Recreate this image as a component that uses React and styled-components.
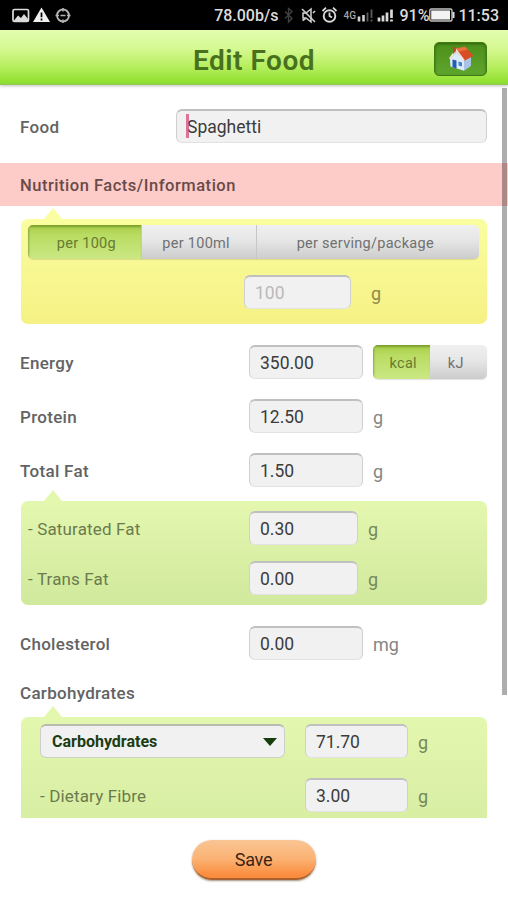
import React, { Component } from 'react'
import styled, { createGlobalStyle } from 'styled-components'

const GlobalStyle = createGlobalStyle`
    * {
        box-sizing: border-box;
    }

    body {
        margin: 0;
        background-color: #fefffe;
        font-family: Roboto, sans-serif;
    }
`

const Screen = styled.div`
    display: flex;
    flex-direction: column;
    width: 508px;
    height: 900px;
    overflow: hidden;
    background-color: #fefffe;
`

const StatusBar = styled.div`
    display: flex;
    justify-content: space-between;
    flex: none;
    height: 30px;
    background-color: #000;
    color: #dcdcdc;
`

const StatusText = styled.span`
    font-size: 16px;
    font-weight: 500;
    line-height: 31px;
    margin-left: ${props => props.$left || 0}px;
    white-space: nowrap;
`

const StatusGroup = styled.div`
    display: flex;
    align-items: center;
    padding: ${props => props.$padding};

    svg {
        flex: none;
    }
`

const Header = styled.div`
    display: grid;
    grid-template-columns: 74px 1fr 74px;
    align-items: center;
    flex: none;
    height: 55px;
    padding-top: 3px;
    background: linear-gradient(#e2fdb0 0%, #d5f890 35%, #b5ee5c 68%, #8fdf2e 96%, #93c55a 100%);
    box-shadow: 0 1px 3px rgba(0, 0, 0, 0.25);
    position: relative;
`

const Title = styled.h1`
    grid-column: 2;
    margin: 0;
    padding-top: 4px;
    color: #47711c;
    font-size: 28px;
    font-weight: 600;
    line-height: 34px;
    letter-spacing: 0.5px;
    text-align: center;
`

const HomeButton = styled.button`
    display: flex;
    align-items: center;
    justify-content: center;
    width: 53px;
    height: 34px;
    padding: 0;
    border: 1px solid #3f7b13;
    border-radius: 5px;
    background: linear-gradient(#4c8f1a, #5fa52c);
    box-shadow: inset 0 1px 3px rgba(0, 0, 0, 0.35);
`

const Content = styled.div`
    flex: none;
    height: 733px;
    overflow: hidden;
    position: relative;
`

const ScrollThumb = styled.div`
    position: absolute;
    top: 3px;
    right: 1px;
    width: 5px;
    height: 607px;
    background-color: rgba(0, 0, 0, 0.32);
`

const Row = styled.div`
    display: flex;
    align-items: center;
    height: 34px;
    margin-top: ${props => props.$top}px;
    padding-left: ${props => props.$left}px;
`

const Label = styled.label`
    flex: none;
    width: ${props => props.$width}px;
    padding-top: 1px;
    color: ${props => props.$sub ? '#6b7b4d' : '#636363'};
    font-size: 17px;
    font-weight: ${props => props.$sub ? 400 : 500};
    line-height: 22px;
    letter-spacing: ${props => props.$sub ? 0.15 : 0.3}px;
    white-space: nowrap;
`

const FieldBox = styled.div`
    flex: none;
    position: relative;
    width: ${props => props.$width}px;
    height: 34px;
`

const Field = styled.input`
    display: block;
    width: 100%;
    height: 34px;
    padding: 1px 10px 0;
    border: 1px solid #d0d0d0;
    border-top: 2px solid #c0c0c0;
    border-bottom-color: #e2e2e2;
    border-radius: 6px;
    outline: none;
    background-color: #f1f1f1;
    color: ${props => props.$muted ? '#b9b9b9' : '#3c3c3c'};
    font-family: inherit;
    font-size: 17.5px;
    letter-spacing: 0;
`

const Caret = styled.span`
    position: absolute;
    top: 5px;
    left: 10px;
    width: 3px;
    height: 24px;
    background-color: rgba(214, 72, 122, 0.75);
`

const Unit = styled.span`
    margin-left: ${props => props.$left || 10}px;
    color: ${props => props.$color || '#858585'};
    font-size: 18px;
    line-height: 22px;
    padding-top: 3px;
`

const SectionTitle = styled.div`
    height: 43px;
    margin-top: 20px;
    padding-left: 20px;
    background-color: #fdcbc8;
    color: #694b49;
    font-size: 16.5px;
    font-weight: 500;
    line-height: 46px;
    letter-spacing: 0.52px;
`

const panelColors = {
    yellow: ['#fafea0', '#f5f184'],
    green: ['#e4f7af', '#d0e99c'],
}

const Panel = styled.div`
    position: relative;
    width: 466px;
    height: ${props => props.$height}px;
    margin-top: ${props => props.$top}px;
    margin-left: 21px;
    border-radius: 7px;
    background: linear-gradient(${props => panelColors[props.$tone].join(', ')});
    display: flow-root;

    &::before {
        content: '';
        position: absolute;
        top: -11px;
        left: 23px;
        border: 9px solid transparent;
        border-top: none;
        border-bottom: 11px solid ${props => panelColors[props.$tone][0]};
    }
`

const Segments = styled.div`
    display: flex;
    flex: none;
    width: ${props => props.$width}px;
    height: 34px;
    margin: ${props => props.$margin};
    border-radius: 5px;
    overflow: hidden;
    box-shadow: 0 1px 1px rgba(0, 0, 0, 0.12);
`

const Segment = styled.button`
    flex: ${props => props.$grow || 1} 1 0;
    padding: 3px ${props => props.$active ? 0 : 5}px 0 ${props => props.$active ? 4 : 0}px;
    border: none;
    border-left: ${props => props.$divided ? '1px solid #c6c6c6' : 'none'};
    background: ${props => props.$active
        ? 'linear-gradient(#a7cc48, #b9dc62 30%, #cbe884)'
        : 'linear-gradient(#f0f0f0, #e6e6e6 45%, #cccccc)'};
    box-shadow: ${props => props.$active ? 'inset 1px 2px 2px rgba(60, 90, 0, 0.4)' : 'none'};
    color: ${props => props.$active ? '#647b30' : '#707070'};
    font-family: inherit;
    font-size: 14.5px;
    letter-spacing: 0.28px;
`

const Select = styled.div`
    display: flex;
    align-items: center;
    justify-content: space-between;
    flex: none;
    width: 245px;
    height: 34px;
    margin-right: 20px;
    padding: 0 7px 0 11px;
    border: 1px solid #cdd0c8;
    border-top: 2px solid #b8bcb0;
    border-radius: 6px;
    background-color: #f1f1f1;
    color: #1c3d14;
    font-size: 16px;
    font-weight: 700;
`

const Footer = styled.div`
    display: flex;
    justify-content: center;
    flex: 1;
    padding-top: 22px;
`

const SaveButton = styled.button`
    width: 124px;
    height: 40px;
    border: none;
    border-bottom: 2px solid #a9602f;
    border-radius: 20px;
    background: linear-gradient(#f9c594, #fbb273 50%, #fb8d3f 92%);
    box-shadow: 0 1px 2px rgba(80, 40, 0, 0.5);
    color: #3d2415;
    font-family: inherit;
    font-size: 18px;
    letter-spacing: -0.3px;
    margin-right: 1px;
    padding: 0;
`

const NoticeIcons = () => (
    <svg width="62" height="20" viewBox="0 0 62 20" fill="none">
        <rect x="1" y="4.5" width="15.5" height="12" rx="1.5" stroke="#dcdcdc" strokeWidth="1.7" />
        <path d="M2 15.5l4-5 3 2.5 3-4 4 5v2.5H2z" fill="#dcdcdc" />
        <path d="M29.5 2.5L38 17H21z" fill="#f0f0f0" />
        <path d="M29.5 7.5v4.8M29.5 13.6v1.8" stroke="#000" strokeWidth="1.7" />
        <circle cx="51" cy="10.5" r="6" stroke="#b4b4b4" strokeWidth="1.8" />
        <path d="M51 3v3.500M51 14.500V18M43.500 10.500H47M55 10.500h3.500M48.500 10.500h5" stroke="#b4b4b4" strokeWidth="1.5" />
    </svg>
)

const SignalIcons = () => (
    <svg width="121" height="20" viewBox="0 0 121 20" fill="none">
        <path d="M7 6.500l7 7-3.500 3.500V3.500L14 6.500l-7 7" stroke="#404040" strokeWidth="1.4" />
        <path d="M25 8h3l5-4v13l-5-4h-3z" stroke="#d0d0d0" strokeWidth="1.5" />
        <path d="M24 4l13 13M35 8l2-2M24.500 15.500l3-2" stroke="#d0d0d0" strokeWidth="1.6" />
        <circle cx="51.5" cy="11" r="5.8" stroke="#d8d8d8" strokeWidth="1.9" />
        <path d="M51.5 7.5V11l2.5 1.5M44.5 6L48 2.700M58.500 6L55 2.700" stroke="#d8d8d8" strokeWidth="1.8" />
        <text x="65.500" y="14" fill="#a4a4a4" fontFamily="Roboto" fontSize="10" fontWeight="500">4G</text>
        <path d="M81 16.5v-5M85.5 16.500V10" stroke="#cfcfcf" strokeWidth="2.6" />
        <path d="M89.500 16.5V7.500M93.500 13V4.500M93.500 14.500v2" stroke="#5c5c5c" strokeWidth="1.8" />
        <path d="M101 16.5v-4M105 16.5v-6M109 16.5V7.500M113.500 13V4.500M113.500 14.500v2" stroke="#dadada" strokeWidth="2.7" />
    </svg>
)

const BatteryIcon = () => (
    <svg width="26" height="14" viewBox="0 0 26 14" fill="none">
        <rect x="0.8" y="1" width="22.2" height="12" rx="1.500" stroke="#c4c4c4" strokeWidth="1.4" />
        <rect x="2.2" y="2.400" width="18.800" height="9.200" fill="#f4f4f4" />
        <path d="M24.500 4v6" stroke="#dcdcdc" strokeWidth="2" />
    </svg>
)

const HomeIcon = () => (
    <svg width="28" height="28" viewBox="0 0 28 28">
        <path d="M3 14l6.5-7 7.5 8.5v10.3L3.5 21.5z" fill="#dceafa" />
        <path d="M17 15.5l7-3.5v9l-7 4.8z" fill="#a9c3e6" />
        <path d="M9 3.5l9-1.7 8.5 9-9.700 5.2z" fill="#d84d24" />
        <path d="M9 3.5l9-1.7 3 3-10 2z" fill="#e8703d" />
        <path d="M9 3.5L2 13.2l1.3 1 6-7.5 7.2 9.6 1.2-1.2z" fill="#f0e3dd" />
        <path d="M6 2h3v4l-3 3z" fill="#c04a2c" />
        <path d="M5.5 14.5l4 1v8l-4-1.300z" fill="#245bb5" />
        <path d="M11.5 16.5l3.5 1v4l-3.500-1z" fill="#3e82cf" />
    </svg>
)

const Chevron = () => (
    <svg width="14" height="8" viewBox="0 0 14 8">
        <path d="M0 0h14L7 8z" fill="#163d0c" />
    </svg>
)

const ValueRow = ({ top, left = 20, label, labelWidth, width, value, unit, sub, unitColor }) => (
    <Row $top={top} $left={left}>
        <Label $width={labelWidth} $sub={sub}>{label}</Label>
        <FieldBox $width={width}>
            <Field defaultValue={value} />
        </FieldBox>
        <Unit $color={unitColor}>{unit}</Unit>
    </Row>
)

export default class App extends Component {
    constructor(props){
        super(props);

        this.state = { per: 'per 100g', energyUnit: 'kcal' }
    }

    render() {
        const per = this.state.per
        const energyUnit = this.state.energyUnit

        return (
            <Screen>
                <GlobalStyle />
                <StatusBar>
                    <StatusGroup $padding='0 0 0 12px'>
                        <NoticeIcons />
                    </StatusGroup>
                    <StatusGroup $padding='0 9px 0 0'>
                        <StatusText>78.00b/s</StatusText>
                        <SignalIcons />
                        <StatusText>91%</StatusText>
                        <BatteryIcon />
                        <StatusText $left={3}>11:53</StatusText>
                    </StatusGroup>
                </StatusBar>

                <Header>
                    <Title>Edit Food</Title>
                    <HomeButton>
                        <HomeIcon />
                    </HomeButton>
                </Header>

                <Content>
                    <Row $top={24} $left={20}>
                        <Label $width={156}>Food</Label>
                        <FieldBox $width={311}>
                            <Field defaultValue='Spaghetti' />
                            <Caret />
                        </FieldBox>
                    </Row>

                    <SectionTitle>Nutrition Facts/Information</SectionTitle>

                    <Panel $tone='yellow' $top={13} $height={105}>
                        <Segments $width={451} $margin='6px 0 0 7px'>
                            {['per 100g', 'per 100ml', 'per serving/package'].map((name, i) => (
                                <Segment
                                    key={name}
                                    $grow={i === 2 ? 2 : 1}
                                    $divided={i > 0}
                                    $active={per === name}
                                    onClick={() => this.setState({ per: name })}
                                >
                                    {name}
                                </Segment>
                            ))}
                        </Segments>
                        <Row $top={16} $left={223}>
                            <FieldBox $width={107}>
                                <Field defaultValue='100' $muted />
                            </FieldBox>
                            <Unit $left={20} $color='#8b8a4c'>g</Unit>
                        </Row>
                    </Panel>

                    <Row $top={21} $left={20}>
                        <Label $width={229}>Energy</Label>
                        <FieldBox $width={114}>
                            <Field defaultValue='350.00' />
                        </FieldBox>
                        <Segments $width={114} $margin='0 0 0 10px'>
                            {['kcal', 'kJ'].map(name => (
                                <Segment
                                    key={name}
                                    $active={energyUnit === name}
                                    onClick={() => this.setState({ energyUnit: name })}
                                >
                                    {name}
                                </Segment>
                            ))}
                        </Segments>
                    </Row>
                    <ValueRow top={20} label='Protein' labelWidth={229} width={114} value='12.50' unit='g' />
                    <ValueRow top={20} label='Total Fat' labelWidth={229} width={114} value='1.50' unit='g' />

                    <Panel $tone='green' $top={14} $height={104}>
                        <ValueRow top={10} left={7} sub label='- Saturated Fat' labelWidth={221} width={109} value='0.30' unit='g' unitColor='#76885a' />
                        <ValueRow top={16} left={7} sub label='- Trans Fat' labelWidth={221} width={109} value='0.00' unit='g' unitColor='#76885a' />
                    </Panel>

                    <ValueRow top={21} label='Cholesterol' labelWidth={229} width={114} value='0.00' unit='mg' />

                    <Row $top={15} $left={20}>
                        <Label>Carbohydrates</Label>
                    </Row>

                    <Panel $tone='green' $top={8} $height={160}>
                        <Row $top={7} $left={19}>
                            <Select>
                                Carbohydrates
                                <Chevron />
                            </Select>
                            <FieldBox $width={103}>
                                <Field defaultValue='71.70' />
                            </FieldBox>
                            <Unit $color='#76885a'>g</Unit>
                        </Row>
                        <ValueRow top={20} left={19} sub label='- Dietary Fibre' labelWidth={265} width={103} value='3.00' unit='g' unitColor='#76885a' />
                    </Panel>

                    <ScrollThumb />
                </Content>

                <Footer>
                    <SaveButton>Save</SaveButton>
                </Footer>
            </Screen>
        )
    }
}
